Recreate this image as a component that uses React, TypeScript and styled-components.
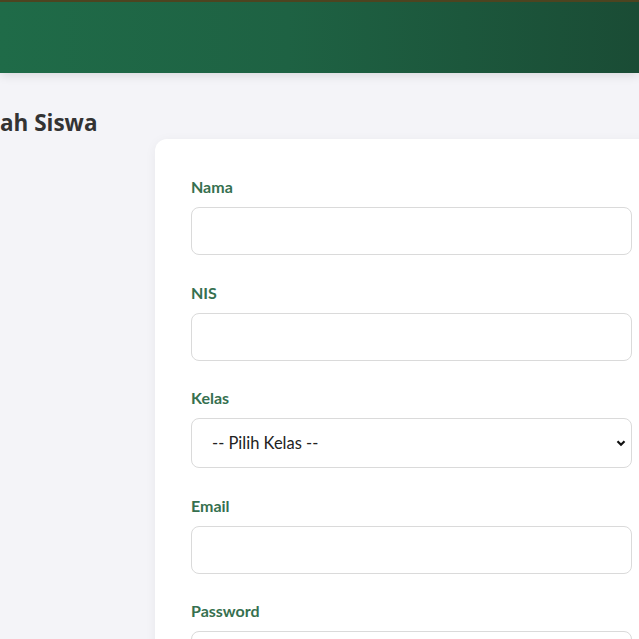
import React from "react";
import styled, { createGlobalStyle } from "styled-components";

const GlobalStyle = createGlobalStyle`
  html, body {
    margin: 0;
    padding: 0;
    background: #f4f4f8;
    font-family: Lato, "Open Sans", sans-serif;
    overflow: hidden;
  }
`;

const Header = styled.header`
  height: 71px;
  border-top: 2px solid #4d4420;
  background: linear-gradient(90deg, #1f6b48 0%, #1e6243 45%, #1a4c35 100%);
  box-shadow: 0 2px 10px rgba(0, 0, 0, 0.12);
`;

const Page = styled.main`
  margin-left: -63px;
  padding-top: 36px;
  width: 760px;
`;

const Title = styled.h2`
  margin: 0 0 2px;
  font-family: "Open Sans", Lato, sans-serif;
  font-size: 22.5px;
  line-height: 28px;
  font-weight: 700;
  color: #333;
`;

const Card = styled.section`
  margin-left: 218px;
  width: 513px;
  box-sizing: border-box;
  padding: 36px 36px;
  background: #fff;
  border-radius: 12px;
  box-shadow: 0 2px 12px rgba(0, 0, 0, 0.05);
`;

const Field = styled.div`
  display: flex;
  flex-direction: column;
  gap: 8px;
  margin-bottom: 25.5px;
`;

const Label = styled.label`
  font-size: 16px;
  line-height: 24px;
  font-weight: 700;
  color: #36704f;
`;

const Input = styled.input`
  box-sizing: border-box;
  height: 48px;
  width: 100%;
  border: 1px solid #dadada;
  border-radius: 8px;
  padding: 0 20px;
  font-family: Lato, sans-serif;
  font-size: 16px;
  background: #fff;
`;

const SelectWrap = styled.div`
  position: relative;
`;

const Select = styled.select`
  box-sizing: border-box;
  appearance: none;
  height: 50px;
  width: 100%;
  border: 1px solid #dadada;
  border-radius: 8px;
  padding: 0 20px;
  font-family: Lato, sans-serif;
  font-size: 16.5px;
  color: #222;
  background: #fff;
`;

const Chevron = styled.svg`
  position: absolute;
  right: 6px;
  top: 20px;
  width: 10px;
  height: 10px;
  pointer-events: none;
`;

const fields = ["Nama", "NIS"];

export default function App() {
  return (
    <>
      <GlobalStyle />
      <Header />
      <Page>
        <Title>Tambah Siswa</Title>
        <Card>
          {fields.map((f) => (
            <Field key={f}>
              <Label>{f}</Label>
              <Input type="text" />
            </Field>
          ))}
          <Field>
            <Label>Kelas</Label>
            <SelectWrap>
              <Select defaultValue="">
                <option value="">-- Pilih Kelas --</option>
              </Select>
              <Chevron viewBox="0 0 10 10">
                <path d="M1.5 3.2 L5 6.7 L8.5 3.2" fill="none" stroke="#111" strokeWidth="2.2" />
              </Chevron>
            </SelectWrap>
          </Field>
          <Field>
            <Label>Email</Label>
            <Input type="email" />
          </Field>
          <Field>
            <Label>Password</Label>
            <Input type="password" />
          </Field>
        </Card>
      </Page>
    </>
  );
}
